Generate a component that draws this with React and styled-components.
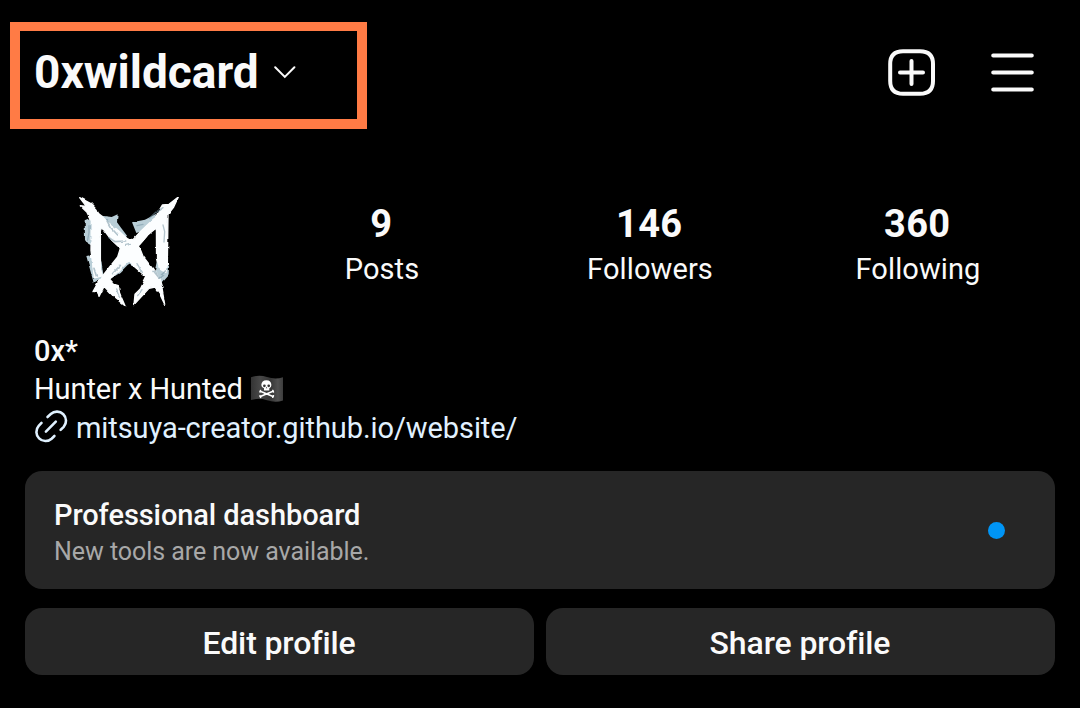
import React from "react";
import styled, { createGlobalStyle } from "styled-components";

const GlobalStyle = createGlobalStyle`
  *, *::before, *::after { box-sizing: border-box; }
  html, body { margin: 0; background: #000; }
  body { font-family: Roboto, "Liberation Sans", sans-serif; color: #fafafa; }
  svg { display: block; flex: none; }
`;

const Screen = styled.main`
  width: 1080px;
  height: 708px;
  padding: 22px 25px 0 10px;
  overflow: hidden;
  background: #000;
`;

const TopBar = styled.header`
  display: flex;
  align-items: flex-start;
  justify-content: space-between;
  height: 107px;
`;

const AccountSwitcher = styled.div`
  display: flex;
  align-items: center;
  width: 357px;
  height: 107px;
  padding: 0 0 6px 14px;
  border: 10px solid #ff7b45;
  border-top-width: 9px;
`;

const Username = styled.h1`
  margin: 0 15px 0 0;
  font-size: 46px;
  line-height: 54px;
  font-weight: 700;
  letter-spacing: 0;
  white-space: nowrap;
`;

const Actions = styled.nav`
  display: flex;
  align-items: center;
  gap: 54px;
  height: 48px;
  margin-top: 27px;
  padding-right: 21px;
`;

const Summary = styled.section`
  display: flex;
  align-items: flex-start;
  height: 130px;
  margin-top: 56px;
  padding-left: 55px;
`;

const Stats = styled.div`
  display: grid;
  grid-template-columns: repeat(3, 268px);
  margin: 16px 0 0 53px;
`;

const Stat = styled.div`
  text-align: center;
  white-space: nowrap;
`;

const StatValue = styled.div`
  font-size: 38px;
  line-height: 46px;
  font-weight: 700;
  letter-spacing: 0.3px;
  padding-right: 1.5px;
`;

const StatLabel = styled.div`
  font-size: 29px;
  line-height: 44px;
  letter-spacing: 0.1px;
`;

const Bio = styled.section`
  display: flex;
  flex-direction: column;
  margin-top: 17px;
  padding-left: 24px;
  font-size: 29px;
  line-height: 38px;
  letter-spacing: -0.08px;
  white-space: nowrap;
`;

const DisplayName = styled.strong`
  font-weight: 500;
`;

const BioLine = styled.div`
  display: flex;
  align-items: center;
  gap: 8px;
`;

const BioLink = styled.a`
  display: flex;
  align-items: center;
  gap: 8px;
  height: 40px;
  color: #e0f1ff;
`;

const Cards = styled.section`
  display: grid;
  grid-template-columns: 1fr 1fr;
  gap: 19px 12px;
  margin: 23px 0 0 15px;
`;

const Dashboard = styled.article`
  grid-column: 1 / -1;
  display: flex;
  align-items: center;
  justify-content: space-between;
  height: 118px;
  padding: 0 50px 0 29px;
  border-radius: 17px;
  background: #262626;
`;

const DashboardTitle = styled.h2`
  margin: 4px 0 0;
  font-size: 29px;
  line-height: 38px;
  font-weight: 500;
  letter-spacing: -0.08px;
`;

const DashboardNote = styled.p`
  margin: 0;
  font-size: 25px;
  line-height: 35px;
  letter-spacing: -0.05px;
  color: #a8a8a8;
`;

const UnreadDot = styled.span`
  width: 17px;
  height: 17px;
  border-radius: 50%;
  background: #0095f6;
`;

const ProfileButton = styled.button`
  height: 67px;
  padding: 3px 1px 0 0;
  border: 0;
  border-radius: 17px;
  background: #262626;
  color: #fafafa;
  font: 500 32px/40px Roboto, "Liberation Sans", sans-serif;
  letter-spacing: -0.12px;
`;

const ChevronIcon = () => (
  <svg width="22" height="14" viewBox="0 0 22 14" fill="none" stroke="#fafafa" strokeWidth="2" strokeLinecap="round">
    <path d="M1.2 2.3 10.8 11.9 20.4 2.3" />
  </svg>
);

const CreateIcon = () => (
  <svg width="48" height="48" viewBox="0 0 48 48" fill="none" stroke="#fafafa" strokeWidth="4" strokeLinecap="round">
    <path d="M15 2.2H32Q45 2.2 45 15V32Q45 44.8 32 44.8H15Q2.2 44.8 2.2 32V15Q2.2 2.2 15 2.2Z" />
    <path d="M23.5 12V35M12 23.5H35" />
  </svg>
);

const MenuIcon = () => (
  <svg width="44" height="48" viewBox="0 0 44 48" stroke="#fafafa" strokeWidth="4" strokeLinecap="round">
    <path d="M3.2 6.5H41.8M3.2 23.6H41.8M3.2 40.6H41.8" />
  </svg>
);

const LinkIcon = () => (
  <svg width="34" height="36" viewBox="-.9 .6 34 36" fill="none" stroke="#e0f1ff" strokeWidth="2.6" strokeLinecap="round">
    <path d="M11 22.2 20.9 12.3" />
    <path d="M12.6 7.6 15.9 4.6A9.1 9.1 0 0 1 28.8 17.4L25.7 20.5" />
    <path d="M6.6 13.5 3.8 16.5A9.1 9.1 0 0 0 16.7 29.3L19.5 26.6" />
  </svg>
);

const PirateFlag = () => (
  <svg width="33" height="28" viewBox="0 0 33 28">
    <defs>
      <linearGradient id="cloth">
        <stop offset="0" stopColor="#343434" />
        <stop offset=".28" stopColor="#484848" />
        <stop offset=".6" stopColor="#353535" />
        <stop offset=".84" stopColor="#505050" />
        <stop offset="1" stopColor="#3c3c3c" />
      </linearGradient>
    </defs>
    <path d="M0 2.2Q8 -.8 16 2T32 2.3V25.5Q24 28 16 25.2T0 25Z" fill="url(#cloth)" />
    <g stroke="#fff" strokeWidth="1.5" strokeLinecap="round">
      <path d="M9.3 16.2 22 21.5M9.3 21.5 22 16.2" />
      <path d="M9.5 15.4 9 17M21.8 15.4 22.5 17M9 20.7 9.7 22.4M22.5 20.7 21.7 22.3" />
    </g>
    <path d="M10.3 10Q10.6 5.2 15.4 5.2Q20.2 5.2 20.4 10Q20.4 12.8 18.3 13.3V15.6H13V13.3Q10.4 12.8 10.3 10Z" fill="#fff" />
    <circle cx="13.4" cy="10.8" r="1.35" fill="#333" />
    <circle cx="17.7" cy="10.8" r="1.35" fill="#333" />
    <path d="M15.5 11.8 14.8 13.2H16.3Z" fill="#333" />
  </svg>
);

const Emblem = () => (
  <svg width="130" height="130" viewBox="0 0 390 390">
    <defs>
      <filter id="torn" x="-5%" y="-5%" width="110%" height="110%">
        <feTurbulence type="fractalNoise" baseFrequency=".045" numOctaves="2" seed="3" result="n" />
        <feDisplacementMap in="SourceGraphic" in2="n" scale="9" xChannelSelector="R" yChannelSelector="G" />
        <feGaussianBlur stdDeviation="2.2" />
      </filter>
    </defs>
    <g filter="url(#torn)">
      <path
        fill="#b9ced7"
        d="M59 106 82 96 84 184 70 176 60 162ZM110 92 140 96 158 88 156 112 168 128 186 152 172 168 118 130ZM201 112 240 104 274 86 262 128 214 144ZM64 213 106 205 116 276 86 293ZM276 226 312 242 311 268 288 294 266 276ZM178 220 205 216 216 250 190 238 164 264 132 284Z"
      />
      <g fill="#fcfeff" stroke="#fcfeff" strokeWidth="4" strokeLinejoin="round">
        <path d="M44 38 76 55 96 76 108 106 106 250 112 272 88 278 78 196 79 108 66 82 46 62 64 64Z" />
        <path d="M340 36 326 66 309 88 307 240 302 262 284 252 274 220 274 132 262 128 278 84 292 60 312 58Z" />
        <path d="M84 72 110 93 128 112 152 130 188 162 204 164 226 140 266 102 290 86 280 124 248 150 222 184 234 214 262 250 286 284 294 310 262 290 240 272 214 250 190 228 168 250 148 270 122 292 98 318 84 320 104 284 134 246 158 216 166 190 140 166 116 134 96 120Z" />
        <path d="M108 278 130 278 148 298 160 302 165 328 180 362 150 338 117 304 102 334 96 310Z" />
        <path d="M244 276 278 276 290 306 299 358 284 326 270 306 252 310 207 359 210 328 226 312Z" />
      </g>
      <path fill="#000" d="M108 134 109 230 130 208 160 188 140 169 122 150ZM271 136 258 150 244 160 222 184 236 202 254 214 272 236Z" />
      <g fill="none" stroke="#7896a5" strokeLinecap="round" opacity=".55">
        <path strokeWidth="5" d="M124 104 136 126 158 150M87 250 94 273M301 258 282 278 264 256M143 266 163 244M132 158 150 170 182 168" />
        <path strokeWidth="4" d="M72 122 72 143 68 164M294 120 299 140 297 171M182 181 196 178M294 68 272 82 253 100M216 122 234 118M216 236 232 262M155 312 163 334M231 314 218 332" />
      </g>
    </g>
  </svg>
);

const stats = [
  { value: "9", label: "Posts" },
  { value: "146", label: "Followers" },
  { value: "360", label: "Following" },
];

export default function App() {
  return (
    <Screen>
      <GlobalStyle />
      <TopBar>
        <AccountSwitcher>
          <Username>0xwildcard</Username>
          <ChevronIcon />
        </AccountSwitcher>
        <Actions>
          <CreateIcon />
          <MenuIcon />
        </Actions>
      </TopBar>
      <Summary>
        <Emblem />
        <Stats>
          {stats.map((s) => (
            <Stat key={s.label}>
              <StatValue>{s.value}</StatValue>
              <StatLabel>{s.label}</StatLabel>
            </Stat>
          ))}
        </Stats>
      </Summary>
      <Bio>
        <DisplayName>0x*</DisplayName>
        <BioLine>
          Hunter x Hunted
          <PirateFlag />
        </BioLine>
        <BioLink>
          <LinkIcon />
          mitsuya-creator.github.io/website/
        </BioLink>
      </Bio>
      <Cards>
        <Dashboard>
          <div>
            <DashboardTitle>Professional dashboard</DashboardTitle>
            <DashboardNote>New tools are now available.</DashboardNote>
          </div>
          <UnreadDot />
        </Dashboard>
        <ProfileButton>Edit profile</ProfileButton>
        <ProfileButton>Share profile</ProfileButton>
      </Cards>
    </Screen>
  );
}
